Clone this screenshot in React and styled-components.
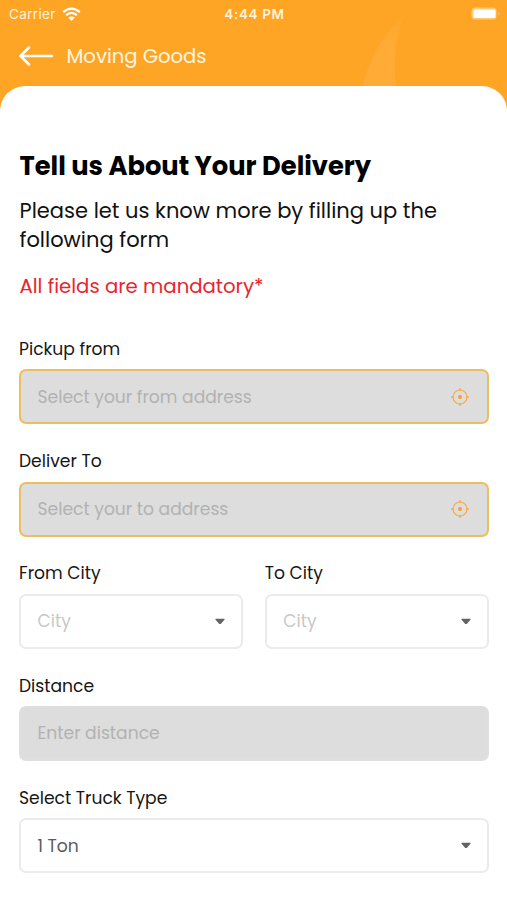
import React from "react";
import styled, { createGlobalStyle } from "styled-components";

const GlobalStyle = createGlobalStyle`
  * { box-sizing: border-box; }
  body {
    margin: 0;
    background: #fff;
    font-family: Poppins, Inter, "Open Sans", sans-serif;
  }
`;

const Screen = styled.div`
  display: flex;
  flex-direction: column;
  min-height: 900px;
  background: #ffa526;
  position: relative;
`;

const Flame = styled.svg`
  position: absolute;
  left: 355px;
  top: 12px;
  width: 60px;
  height: 80px;
`;

const StatusBar = styled.div`
  display: grid;
  grid-template-columns: 1fr auto 1fr;
  align-items: center;
  height: 28px;
  padding: 0 6px 0 9px;
  color: #fff3dc;
  font-family: Inter, "Open Sans", sans-serif;
  font-size: 13.5px;
`;

const CarrierGroup = styled.div`
  display: flex;
  align-items: center;
  gap: 6px;
  letter-spacing: 0.35px;
`;

const Clock = styled.div`
  margin-right: 1px;
  font-weight: 600;
  letter-spacing: 0.65px;
`;

const Battery = styled.svg`
  justify-self: end;
  width: 31px;
  height: 16px;
`;

const NavBar = styled.header`
  display: flex;
  align-items: center;
  gap: 12.5px;
  height: 58px;
  padding: 0 18px 2px;
  color: #fff6e4;
`;

const NavTitle = styled.div`
  font-size: 19.6px;
  line-height: 28px;
`;

const BackButton = styled.button`
  display: flex;
  padding: 0;
  border: 0;
  background: none;
  color: #fff;
`;

const Sheet = styled.main`
  position: relative;
  flex: 1;
  padding: 62px 18.5px 27px 19px;
  background: #fff;
  border-radius: 25px 25px 0 0;
`;

const Title = styled.h1`
  margin: 0;
  padding-left: 0.5px;
  font-size: 25.75px;
  font-weight: 700;
  line-height: 36px;
  color: #000;
`;

const Intro = styled.p`
  margin: 12px 0 0;
  padding-left: 0.5px;
  font-size: 21px;
  line-height: 29px;
  color: #111;
`;

const Notice = styled.p`
  margin: 17px 0 0;
  padding-left: 0.5px;
  font-size: 19.7px;
  line-height: 30px;
  color: #e8252f;
`;

const Form = styled.form`
  display: flex;
  flex-direction: column;
  gap: 23.8px;
  margin-top: 35px;
`;

const FieldRow = styled.div`
  display: grid;
  grid-template-columns: 1fr 1fr;
  gap: 22px;
`;

const Field = styled.div`
  display: flex;
  flex-direction: column;
  gap: 6.4px;
`;

const Label = styled.div`
  height: 27px;
  font-size: 17.15px;
  line-height: 27px;
  color: #161616;
  white-space: nowrap;
`;

const boxStyles = {
  address: "border: 2px solid #efbd61; background: #ddd; color: #b2b2b2;",
  disabled: "border: 2px solid #dfdfdf; background: #ddd; color: #b2b2b2;",
  select: "border: 2px solid #ebebeb; background: #fff; color: #c8c8c8;",
  filled: "border: 2px solid #ebebeb; background: #fff; color: #5c5c5c;",
};

const Control = styled.div`
  display: flex;
  align-items: center;
  justify-content: space-between;
  height: 55px;
  padding: 0 16px 0 16.5px;
  border-radius: 7px;
  font-size: 17.15px;
  ${(p) => boxStyles[p.$kind]}
`;

const TargetSvg = styled.svg`
  width: 18px;
  height: 18px;
  margin-right: 2px;
`;

const CaretSvg = styled.svg`
  width: 10px;
  height: 7px;
`;

const Target = () => (
  <TargetSvg viewBox="0 0 18 18" fill="none" stroke="#f8ab42">
    <circle cx="9" cy="9" r="7" strokeWidth="1.2" />
    <circle cx="9" cy="9" r="2" fill="#f6a02f" stroke="none" />
    <path d="M9 .2v2.800M9 15v2.800M.2 9h2.800M15 9h2.800" strokeWidth="1.6" />
  </TargetSvg>
);

const Caret = () => (
  <CaretSvg viewBox="0 0 10 7" fill="#636363">
    <path d="M1 .8h8q.8 0 .5 1L6.200 5.500q-1.200 1-2.400 0L.5 1.800Q.2.8 1 .8z" />
  </CaretSvg>
);

const Wifi = () => (
  <svg width="19" height="15" viewBox="0 0 19 15" fill="none" stroke="#fff" strokeWidth="2.2">
    <path d="M1.200 5.200Q9.500-2 17.800 5.200" />
    <path d="M4.200 8.200Q9.500 3.600 14.800 8.200" />
    <path d="M9.500 13.900L6.200 10.600Q9.500 8.200 12.800 10.600z" fill="#fff" stroke="none" />
  </svg>
);

const TextField = ({ label, kind, text, icon }) => (
  <Field>
    <Label>{label}</Label>
    <Control $kind={kind}>
      <span>{text}</span>
      {icon}
    </Control>
  </Field>
);

export default function App() {
  return (
    <Screen>
      <GlobalStyle />
      <Flame viewBox="0 0 60 80">
        <defs>
          <linearGradient id="flame" x1="0" y1="0" x2="0" y2="1">
            <stop offset="0" stopColor="#ffad3b" stopOpacity="0.2" />
            <stop offset="0.4" stopColor="#ffad3b" stopOpacity="0.8" />
          </linearGradient>
        </defs>
        <path d="M6 80C14 49 28 20 50 3C41 18 37 51 42 80z" fill="url(#flame)" />
      </Flame>
      <StatusBar>
        <CarrierGroup>
          <span>Carrier</span>
          <Wifi />
        </CarrierGroup>
        <Clock>4:44 PM</Clock>
        <Battery viewBox="0 0 31 16">
          <rect x="1.5" y="1.5" width="25" height="12" rx="3.5" fill="#ffc978" />
          <rect x="3.5" y="3.5" width="22" height="8.5" rx="1.5" fill="#fff" />
          <path d="M28.500 6q2 1.500 0 4z" fill="#ffc978" />
        </Battery>
      </StatusBar>
      <NavBar>
        <BackButton type="button" aria-label="Back">
          <svg width="36" height="22" viewBox="0 0 36 22" fill="none" stroke="currentColor" strokeWidth="2.6" strokeLinecap="round" strokeLinejoin="round">
            <path d="M34 11H2.500M11 2.500L2.500 11l8.500 8.500" />
          </svg>
        </BackButton>
        <NavTitle>Moving Goods</NavTitle>
      </NavBar>
      <Sheet>
        <Title>Tell us About Your Delivery</Title>
        <Intro>
          Please let us know more by filling up the
          <br />
          following form
        </Intro>
        <Notice>All fields are mandatory*</Notice>
        <Form>
          <TextField label="Pickup from" kind="address" text="Select your from address" icon={<Target />} />
          <TextField label="Deliver To" kind="address" text="Select your to address" icon={<Target />} />
          <FieldRow>
            <TextField label="From City" kind="select" text="City" icon={<Caret />} />
            <TextField label="To City" kind="select" text="City" icon={<Caret />} />
          </FieldRow>
          <TextField label="Distance" kind="disabled" text="Enter distance" />
          <TextField label="Select Truck Type" kind="filled" text="1 Ton" icon={<Caret />} />
        </Form>
      </Sheet>
    </Screen>
  );
}
